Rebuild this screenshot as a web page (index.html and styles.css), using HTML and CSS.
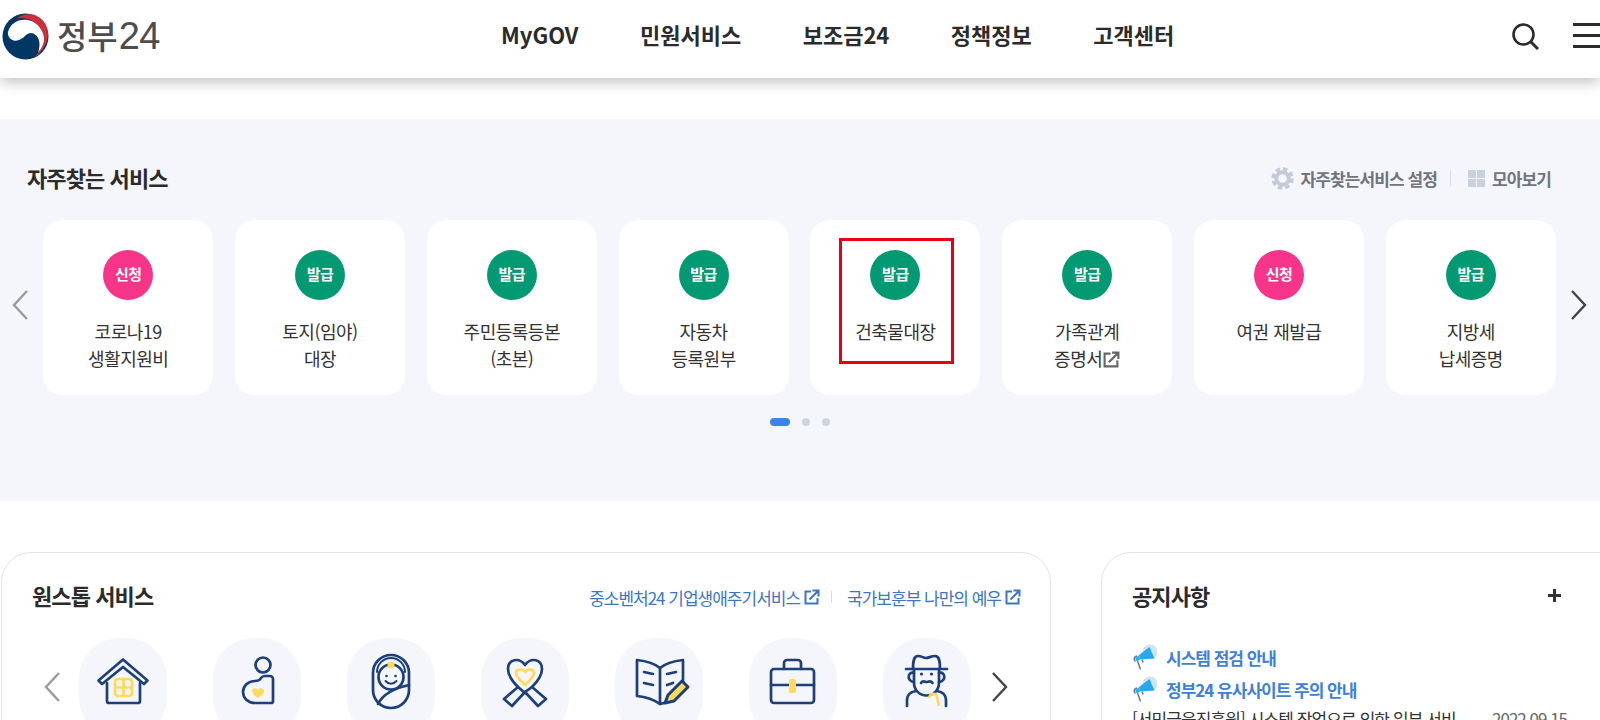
FILE: index.html
```html
<!DOCTYPE html>
<html lang="ko">
<head>
    <meta charset="UTF-8">
    <meta name="viewport" content="width=device-width, initial-scale=1.0">
    <title>정부24</title>
    <link rel="stylesheet" href="styles.css">
</head>
<body>
    <svg class="icon-defs" width="0" height="0">
        <symbol id="ext" viewBox="0 0 16 16">
            <path d="M7 2.500H1.500v12h12V9" fill="none" stroke="currentColor" stroke-width="2"/>
            <path d="M5.500 10.500L14 2M8.500 1.500h6v6" fill="none" stroke="currentColor" stroke-width="2"/>
        </symbol>
        <symbol id="megaphone" viewBox="0 0 26 27">
            <circle cx="18" cy="8" r="7.500" fill="#cfe3fa"/>
            <path d="M7 11L17.500 3 22.500 14.500 8 15.500Z" fill="#27a9ee"/>
            <path d="M3 14.500L7 11 8 15.500 5 17.500Z" fill="#27a9ee"/>
            <path d="M5 12a3 3 0 0 0-1.500 5.500M5.500 17l3 8.500M10 15.500l1 3" fill="none" stroke="#6b7684" stroke-width="1.500"/>
        </symbol>
    </svg>

    <header class="topbar">
        <a class="logo" href="#">
            <svg class="logo-mark" viewBox="0 0 48 48" width="47" height="47">
                <circle cx="24" cy="24" r="23.500" fill="#003764"/>
                <path d="M14 6C22 0 34-1 42 8 50 17 49 34 33 46 41 36 45 26 39 15 33 7 22 3 14 6Z" fill="#cd2e3a"/>
                <path d="M6 20C8 11 16 6 25 7 34 8 41 15 43 25 43 31 41 36 37 40 39 34 39 27 35 23 31 19 27 20 24 23 20 27 16 29 12 28 8 27 6 24 6 20Z" fill="#fff"/>
            </svg>
            <span class="logo-text">정부<span class="logo-num">24</span></span>
        </a>
        <nav class="gnb">
            <a href="#">MyGOV</a>
            <a href="#">민원서비스</a>
            <a href="#">보조금24</a>
            <a href="#">정책정보</a>
            <a href="#">고객센터</a>
        </nav>
        <div class="top-icons">
            <svg viewBox="0 0 28 28" width="28" height="28">
                <circle cx="12.500" cy="12.500" r="10" fill="none" stroke="#2b2b2b" stroke-width="2.600"/>
                <path d="M20 20l7 7" stroke="#2b2b2b" stroke-width="3"/>
            </svg>
            <div class="burger"><i></i><i></i><i></i></div>
        </div>
    </header>

    <section class="favorites">
        <div class="fav-head">
            <h2>자주찾는 서비스</h2>
            <div class="fav-tools">
                <a href="#">
                    <svg viewBox="0 0 24 24" width="23" height="23">
                        <circle cx="12" cy="12" r="9.500" fill="none" stroke="#c3cbd8" stroke-width="4.500" stroke-dasharray="4.500 3"/>
                        <circle cx="12" cy="12" r="6.500" fill="none" stroke="#c3cbd8" stroke-width="4"/>
                    </svg>
                    자주찾는서비스 설정
                </a>
                <span class="tool-sep"></span>
                <a href="#">
                    <span class="grid-icon"><i></i><i></i><i></i><i></i></span>
                    모아보기
                </a>
            </div>
        </div>

        <div class="fav-slider">
            <svg class="arrow" viewBox="0 0 16 30" width="16" height="30"><path d="M15 1L2 15l13 14" fill="none" stroke="#9a9a9a" stroke-width="2.400"/></svg>
            <div class="cards">
                <a class="card" href="#"><span class="badge apply">신청</span><span class="card-label">코로나19<br>생활지원비</span></a>
                <a class="card" href="#"><span class="badge issue">발급</span><span class="card-label">토지(임야)<br>대장</span></a>
                <a class="card" href="#"><span class="badge issue">발급</span><span class="card-label">주민등록등본<br>(초본)</span></a>
                <a class="card" href="#"><span class="badge issue">발급</span><span class="card-label">자동차<br>등록원부</span></a>
                <a class="card marked" href="#"><span class="badge issue">발급</span><span class="card-label">건축물대장</span></a>
                <a class="card" href="#"><span class="badge issue">발급</span><span class="card-label">가족관계<br>증명서<svg class="ext-gray" width="17" height="17"><use href="#ext"/></svg></span></a>
                <a class="card" href="#"><span class="badge apply">신청</span><span class="card-label">여권 재발급</span></a>
                <a class="card" href="#"><span class="badge issue">발급</span><span class="card-label">지방세<br>납세증명</span></a>
            </div>
            <svg class="arrow" viewBox="0 0 16 30" width="16" height="30"><path d="M1 1l13 14L1 29" fill="none" stroke="#444" stroke-width="2.400"/></svg>
        </div>

        <div class="dots"><i class="on"></i><i></i><i></i></div>
    </section>

    <div class="lower">
        <section class="panel onestop">
            <div class="panel-head">
                <h2>원스톱 서비스</h2>
                <div class="links">
                    <a href="#">중소벤처24 기업생애주기서비스<svg width="16" height="16"><use href="#ext"/></svg></a>
                    <span class="link-sep"></span>
                    <a href="#">국가보훈부 나만의 예우<svg width="16" height="16"><use href="#ext"/></svg></a>
                </div>
            </div>
            <div class="onestop-row">
                <svg class="arrow" viewBox="0 0 16 30" width="16" height="30"><path d="M15 1L2 15l13 14" fill="none" stroke="#9a9a9a" stroke-width="2.400"/></svg>
                <div class="tiles">
                    <div class="tile">
                        <svg viewBox="0 0 88 88" width="88" height="88">
                            <rect x="36" y="41" width="17" height="17" rx="3" class="yl"/>
                            <path d="M44.500 41v17M36 49.500h17" class="yl"/>
                            <path d="M19.500 42.500L44 21.500l24.500 21-3.500 3.500L44 29 23 46Z" class="nv"/>
                            <path d="M28 45v18a2 2 0 0 0 2 2h29a2 2 0 0 0 2-2V45" class="nv"/>
                        </svg>
                    </div>
                    <div class="tile">
                        <svg viewBox="0 0 88 88" width="88" height="88">
                            <circle cx="50" cy="27" r="7.500" class="nv"/>
                            <path d="M60 41v22a2 2 0 0 1-2 2H42C35 65 30 60 30 54c0-6 5-11 12-11 4 0 5-1 6-3 1-1.500 2-2 4-2h5a3 3 0 0 1 3 3Z" class="nv"/>
                            <path d="M45 60c-3-2-6-4-6-7 0-3 4-4 6-1 2-3 6-2 6 1 0 3-3 5-6 7Z" fill="#ffd95a"/>
                        </svg>
                    </div>
                    <div class="tile">
                        <svg viewBox="0 0 88 88" width="88" height="88">
                            <rect x="26" y="17" width="36" height="53" rx="18" class="nv"/>
                            <path d="M30 34a14 14 0 0 1 28 0" class="nv thin"/>
                            <circle cx="44" cy="39" r="12.500" class="nv"/>
                            <circle cx="44" cy="27" r="3.500" fill="#ffd95a"/>
                            <circle cx="39.500" cy="38" r="1.300" fill="#1d3f7a"/>
                            <circle cx="48.500" cy="38" r="1.300" fill="#1d3f7a"/>
                            <path d="M38.500 43c3 3.500 8 3.500 11 0" class="nv thin"/>
                            <path d="M62 47C48 50 36 56 31 66" class="nv"/>
                        </svg>
                    </div>
                    <div class="tile">
                        <svg viewBox="0 0 88 88" width="88" height="88">
                            <path d="M44 27c-6-8-17-6-17 4 0 6 4 12 10 18L23 61l8 7 13-14 13 14 8-7-14-12c6-6 10-12 10-18 0-10-11-12-17-4Z" class="nv"/>
                            <path d="M37 49l7 6M51 49l-7 5" class="nv"/>
                            <path d="M44 34c-3-4-9-3-9 1 0 4 5 8 9 12 4-4 9-8 9-12 0-4-6-5-9-1Z" class="yl"/>
                        </svg>
                    </div>
                    <div class="tile">
                        <svg viewBox="0 0 88 88" width="88" height="88">
                            <path d="M45 30c-6-5-14-7-23-8v36c9 1 16 3 23 8" class="nv"/>
                            <path d="M45 30c6-5 14-7 23-8v22M45 30v36l4-1" class="nv"/>
                            <path d="M29 34l9 2M29 45l9 2M52 36l9-2M52 47l6-2" class="nv"/>
                            <path d="M50 65l3-8 14-14 6 6-14 14Z" fill="#ffd95a" stroke="#1d3f7a" stroke-width="3" stroke-linejoin="round"/>
                        </svg>
                    </div>
                    <div class="tile">
                        <svg viewBox="0 0 88 88" width="88" height="88">
                            <rect x="22" y="31" width="43" height="34" rx="3" class="nv"/>
                            <path d="M35 31v-6a3 3 0 0 1 3-3h11a3 3 0 0 1 3 3v6M22 47h43" class="nv"/>
                            <rect x="40" y="41" width="7" height="14" rx="2" fill="#ffd95a"/>
                        </svg>
                    </div>
                    <div class="tile">
                        <svg viewBox="0 0 88 88" width="88" height="88">
                            <path d="M23 31h41M30 31c0-9 1-13 5-13 4 0 5 2 8 2s5-2 9-2c4 0 5 4 5 13" class="nv"/>
                            <path d="M31 31v14a12 12 0 0 0 25 0V31" class="nv"/>
                            <path d="M31 35c-6-2-8 8 0 9M56 35c6-2 8 8 0 9" class="nv"/>
                            <circle cx="38.500" cy="36" r="1.600" fill="#1d3f7a"/>
                            <circle cx="48.500" cy="36" r="1.600" fill="#1d3f7a"/>
                            <path d="M38 45c2-3 4-1 5.500-1s4-2 6 1" class="nv"/>
                            <path d="M24 68v-6c0-5 3-8 9-9M63 68v-6c0-5-3-8-9-9" class="nv"/>
                            <path d="M46 60c1-5 7-6 8-1l2 9" fill="none" stroke="#ffd95a" stroke-width="2.500"/>
                        </svg>
                    </div>
                </div>
                <svg class="arrow" viewBox="0 0 16 30" width="16" height="30"><path d="M1 1l13 14L1 29" fill="none" stroke="#444" stroke-width="2.400"/></svg>
            </div>
        </section>

        <section class="panel notice">
            <div class="panel-head">
                <h2>공지사항</h2>
                <span class="plus"></span>
            </div>
            <ul class="notice-list">
                <li class="pinned"><svg width="26" height="27"><use href="#megaphone"/></svg><a href="#">시스템 점검 안내</a></li>
                <li class="pinned"><svg width="26" height="27"><use href="#megaphone"/></svg><a href="#">정부24 유사사이트 주의 안내</a></li>
                <li class="plain"><a href="#">[서민금융진흥원] 시스템 작업으로 인한 일부 서비</a><span>2022.09.15</span></li>
            </ul>
        </section>
    </div>
</body>
</html>
```

FILE: styles.css
```css
* {
    margin: 0;
    padding: 0;
    box-sizing: border-box;
}
html, body {
    height: 720px;
    overflow: hidden;
}
body {
    background: #fff;
    color: #2b2b2b;
    font-family: 'Noto Sans CJK KR', 'Noto Sans', sans-serif;
}
a {
    color: inherit;
    text-decoration: none;
}
i {
    display: block;
}
.icon-defs {
    position: absolute;
}

/* header */
.topbar {
    height: 78px;
    display: flex;
    align-items: center;
    background: #fff;
    box-shadow: 0 3px 14px rgba(0, 0, 0, 0.28);
    position: relative;
}
.logo {
    width: 501px;
    display: flex;
    align-items: center;
    padding-left: 2px;
    gap: 8px;
    margin-top: -6px;
}
.logo-text {
    font-size: 33px;
    font-weight: 500;
    line-height: 1;
    color: #4d4d4d;
}
.logo-num {
    font-family: 'Liberation Sans', sans-serif;
    font-size: 38px;
    font-weight: 400;
    letter-spacing: -0.5px;
    margin-left: 1px;
}
.gnb {
    display: flex;
    gap: 61.500px;
    font-size: 22px;
    font-weight: 700;
    margin-top: -11px;
}
.top-icons {
    margin-left: auto;
    display: flex;
    align-items: center;
    gap: 34px;
    margin-top: -7px;
}
.burger {
    width: 27px;
    display: flex;
    flex-direction: column;
    gap: 8.500px;
}
.burger i {
    height: 2.500px;
    background: #2b2b2b;
}

/* favorites */
.favorites {
    margin-top: 41px;
    height: 382px;
    background: #f4f6fb;
    padding-top: 41px;
}
.fav-head {
    display: flex;
    justify-content: space-between;
    align-items: center;
    padding: 0 49px 0 27px;
    height: 36px;
}
.fav-head h2 {
    font-size: 22px;
    letter-spacing: -0.9px;
    font-weight: 700;
    margin-top: -2px;
}
.fav-tools {
    display: flex;
    align-items: center;
    font-size: 17px;
    font-weight: 700;
    letter-spacing: -0.9px;
    color: #70747b;
}
.fav-tools a {
    display: flex;
    align-items: center;
    gap: 7px;
}
.tool-sep {
    width: 1px;
    height: 16px;
    background: #d8dce4;
    margin: 0 17px 0 13px;
}
.grid-icon {
    width: 17px;
    display: grid;
    grid-template-columns: 1fr 1fr;
    gap: 1px;
}
.grid-icon i {
    height: 8px;
    background: #c9d1de;
}
.fav-slider {
    display: flex;
    align-items: center;
    justify-content: space-between;
    padding: 0 13px 0 11px;
    margin-top: 24px;
}
.fav-slider .arrow {
    margin-top: -5px;
}
.fav-slider .arrow:first-child {
    margin-left: 1px;
}
.cards {
    display: flex;
    gap: 21.800px;
}
.card {
    width: 170px;
    height: 175px;
    background: #fff;
    border-radius: 20px;
    padding-top: 30px;
    display: flex;
    flex-direction: column;
    align-items: center;
    text-align: center;
    position: relative;
}
.card.marked::after {
    content: "";
    box-sizing: border-box;
    position: absolute;
    left: 29px;
    top: 18px;
    width: 115px;
    height: 126px;
    border: 3px solid #e60012;
}
.badge {
    width: 50px;
    height: 50px;
    border-radius: 50%;
    display: flex;
    align-items: center;
    justify-content: center;
    padding-bottom: 3px;
    color: #fff;
    font-size: 15px;
    font-weight: 700;
    letter-spacing: -0.5px;
}
.badge.apply {
    background: #f5348a;
}
.badge.issue {
    background: #039a73;
}
.card-label {
    margin-top: 18px;
    font-size: 18px;
    line-height: 26.500px;
    letter-spacing: -0.5px;
    color: #333;
}
.ext-gray {
    color: #666;
    vertical-align: -2px;
    margin-left: 1px;
}
.dots {
    display: flex;
    justify-content: center;
    align-items: center;
    gap: 12px;
    margin-top: 23px;
}
.dots i {
    width: 8px;
    height: 8px;
    border-radius: 50%;
    background: #ccd3e1;
}
.dots i.on {
    width: 20px;
    border-radius: 4px;
    background: #3a86e8;
}

/* lower panels */
.lower {
    display: flex;
    margin-top: 51px;
    padding-left: 1px;
    gap: 50px;
}
.panel {
    height: 260px;
    border: 1px solid #e4e4e4;
    border-radius: 30px;
    background: #fff;
    padding: 24px 30px 0;
    flex-shrink: 0;
}
.onestop {
    width: 1050px;
}
.notice {
    width: 540px;
}
.panel-head {
    display: flex;
    justify-content: space-between;
    align-items: center;
    height: 40px;
}
.panel-head h2 {
    font-size: 22px;
    letter-spacing: -0.9px;
    font-weight: 700;
    margin-top: -4px;
}
.links {
    display: flex;
    align-items: center;
    font-size: 17px;
    letter-spacing: -1px;
    color: #3b76c6;
    margin-right: -1px;
}
.links a {
    display: flex;
    align-items: center;
    gap: 4px;
}
.link-sep {
    width: 1px;
    height: 12px;
    background: #d5d9e0;
    margin: 0 15px 0 11px;
}
.onestop-row {
    display: flex;
    align-items: flex-start;
    margin: 21px 0 0 12px;
}
.onestop-row .arrow {
    margin-top: 34px;
}
.tiles {
    display: flex;
    gap: 46px;
    margin: 0 21px 0 19px;
}
.tile {
    width: 88px;
    height: 100px;
    border-radius: 40px;
    background: #f4f6fb;
}
.nv, .yl {
    fill: none;
    stroke-width: 2.700;
    stroke-linejoin: round;
    stroke-linecap: round;
}
.nv {
    stroke: #1d3f7a;
}
.nv.thin {
    stroke-width: 2;
}
.yl {
    stroke: #ffd95a;
}
.notice .panel-head {
    width: 429px;
}
.plus {
    width: 13px;
    height: 13px;
    margin-top: -4px;
    background:
        linear-gradient(#333, #333) center / 100% 3px no-repeat,
        linear-gradient(#333, #333) center / 3px 100% no-repeat;
}
.notice-list {
    list-style: none;
    margin-top: 24px;
}
.pinned {
    height: 32px;
    display: flex;
    align-items: center;
    gap: 8px;
    font-size: 17px;
    font-weight: 700;
    letter-spacing: -1px;
    color: #3d7fdc;
}
.plain {
    width: 435px;
    display: flex;
    justify-content: space-between;
    margin-top: 2px;
    font-size: 17px;
    line-height: 24px;
    letter-spacing: -0.9px;
    color: #333;
}
.plain span {
    letter-spacing: -1px;
    color: #666;
}
```
